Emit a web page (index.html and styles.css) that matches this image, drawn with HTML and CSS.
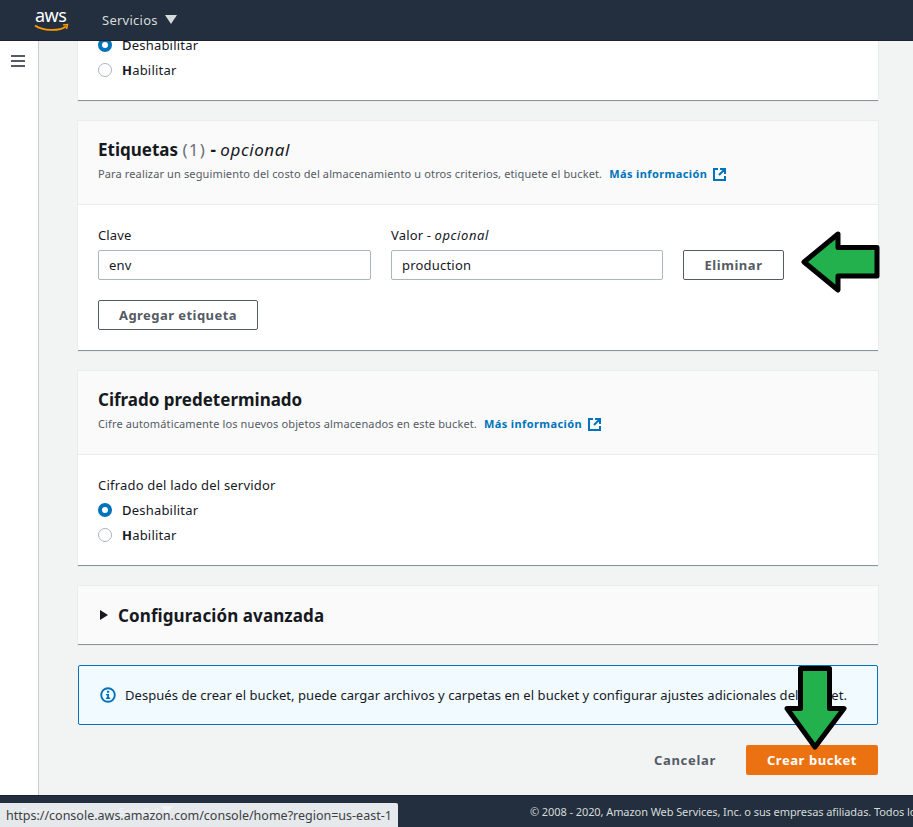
FILE: index.html

```html
<!DOCTYPE html>
<html lang="es">
<head>
  <meta charset="UTF-8">
  <title>Crear bucket</title>
  <link rel="stylesheet" href="styles.css">
</head>
<body>
<header class="topbar">
  <svg class="logo" width="38" height="24" viewBox="0 0 38 24" aria-label="aws">
    <text x="1" y="14" class="logo-text">aws</text>
    <path d="M1 17.5 C9 23 25 23.5 32 18.5" fill="none" stroke="#f90" stroke-width="1.8"/>
    <path d="M29 17 L33.5 16.5 L32.5 21" fill="none" stroke="#f90" stroke-width="1.5"/>
  </svg>
  <span class="services">Servicios</span>
  <span class="caret"></span>
</header>
<div class="middle">
  <aside class="sidebar">
    <div class="burger"><span></span><span></span><span></span></div>
  </aside>
  <main class="content">
    <section class="card card-cut">
      <div class="card-body">
        <div class="radio-row"><span class="radio on"></span><span><b class="first">D</b>eshabilitar</span></div>
        <div class="radio-row"><span class="radio"></span><span><b>H</b>abilitar</span></div>
      </div>
    </section>

    <section class="card">
      <div class="card-head">
        <h2>Etiquetas <span class="count">(1)</span> - <em>opcional</em></h2>
        <p>Para realizar un seguimiento del costo del almacenamiento u otros criterios, etiquete el bucket. <a href="#">Más información</a>
          <svg class="ext" width="15" height="15" viewBox="0 0 15 15"><path d="M6 2H2V13H13V9M8 2H13V7M13 2L7 8" fill="none" stroke="#0073bb" stroke-width="2"/></svg>
        </p>
      </div>
      <div class="card-body tags">
        <div class="tag-row">
          <label class="field">Clave<input class="text-input" value="env"></label>
          <label class="field">Valor - <i>opcional</i><input class="text-input" value="production"></label>
          <button class="btn btn-remove">Eliminar</button>
        </div>
        <button class="btn btn-add">Agregar etiqueta</button>
      </div>
    </section>

    <section class="card">
      <div class="card-head">
        <h2>Cifrado predeterminado</h2>
        <p>Cifre automáticamente los nuevos objetos almacenados en este bucket. <a href="#">Más información</a>
          <svg class="ext" width="15" height="15" viewBox="0 0 15 15"><path d="M6 2H2V13H13V9M8 2H13V7M13 2L7 8" fill="none" stroke="#0073bb" stroke-width="2"/></svg>
        </p>
      </div>
      <div class="card-body encryption">
        <div class="group-label">Cifrado del lado del servidor</div>
        <div class="radio-row"><span class="radio on"></span><span><b class="first">D</b>eshabilitar</span></div>
        <div class="radio-row"><span class="radio"></span><span><b>H</b>abilitar</span></div>
      </div>
    </section>

    <section class="card card-advanced">
      <span class="tri"></span>
      <h2>Configuración avanzada</h2>
    </section>

    <div class="alert">
      <svg width="16" height="16" viewBox="0 0 16 16"><circle cx="8" cy="8" r="6.8" fill="none" stroke="#0073bb" stroke-width="1.9"/><rect x="7" y="3.8" width="2.2" height="2" fill="#0073bb"/><path d="M6 7H9V10.6H10.2V12H6V10.6H7.1V8.3H6Z" fill="#0073bb"/></svg>
      <span>Después de crear el bucket, puede cargar archivos y carpetas en el bucket y configurar ajustes adicionales del bucket.</span>
    </div>

    <div class="actions">
      <a class="cancel" href="#">Cancelar</a>
      <button class="btn-primary">Crear bucket</button>
    </div>
  </main>
</div>
<footer class="footer">
  <div class="footer-left"><span>Comentarios</span><span>Español</span><span class="caret caret-small"></span></div>
  <div class="copy">© 2008 - 2020, Amazon Web Services, Inc. o sus empresas afiliadas. Todos los derechos reservados.</div>
</footer>

<svg class="arrow arrow-left" width="80" height="64" viewBox="0 0 80 64"><path d="M37 4 L3 32 L37 60 V46 H76 V17.5 H37 Z" fill="#22b14c" stroke="#000" stroke-width="5" stroke-linejoin="round"/></svg>
<svg class="arrow arrow-down" width="64" height="88" viewBox="0 0 64 88"><path d="M16.5 3.5 V43.5 H3 L31 82 L60 43.5 H45.5 V3.5 Z" fill="#22b14c" stroke="#000" stroke-width="5" stroke-linejoin="round"/></svg>
<div class="status">https://console.aws.amazon.com/console/home?region=us-east-1</div>
</body>
</html>
```

FILE: styles.css

```css
* { box-sizing: border-box; }
html, body { margin: 0; height: 100%; }
body { width: 913px; height: 827px; overflow: hidden; display: flex; flex-direction: column; position: relative; font-family: "Noto Sans", "Open Sans", sans-serif; font-size: 13px; color: #16191f; background: #f2f3f3; }

.topbar { height: 41px; flex: none; background: #232f3e; display: flex; align-items: center; padding-left: 34px; color: #d5dbdb; border-bottom: 1px solid #1a2430; z-index: 2; }
.logo { margin-right: 30px; margin-top: -1px; }
.logo-text { font: 18px "Noto Sans", sans-serif; fill: #fff; letter-spacing: -.5px; }
.services { font-size: 13px; letter-spacing: .25px; margin-top: -1px; }
.caret { width: 0; height: 0; margin-left: 7px; margin-top: -2px; border-left: 6px solid transparent; border-right: 6px solid transparent; border-top: 9px solid #d5dbdb; }

.middle { flex: 1; display: flex; min-height: 0; }
.sidebar { width: 39px; flex: none; background: #fff; border-right: 1px solid #c8cccc; padding: 14px 11px; }
.burger span { display: block; width: 14px; height: 2px; background: #545b64; margin-bottom: 3px; }

.content { flex: 1; min-width: 0; padding: 0 35px 0 39px; overflow: hidden; }
.card { background: #fff; border-bottom: 1px solid #879596; box-shadow: 0 0 0 1px #eaeded; margin-bottom: 20px; }
.card-cut { margin-top: -9px; }
.card-cut .card-body { padding: 0 20px 18px; }

.card-head { background: #fafafa; border-bottom: 1px solid #eaeded; padding: 17px 20px 0; height: 84px; }
.card-head h2 { margin: 0; font-size: 17px; line-height: 24px; font-weight: 700; }
.card-head h2 em { font-weight: 400; letter-spacing: .6px; }
.count { color: #687078; font-weight: 400; letter-spacing: 1.2px; }
.card-head p { margin: 3px 0 0; font-size: 11px; line-height: 18px; color: #545b64; letter-spacing: .13px; display: flex; align-items: center; gap: 4px; white-space: pre; }
.card-head a { color: #0073bb; font-weight: 700; text-decoration: none; letter-spacing: .4px; }
.ext { margin-left: 1px; }

.radio-row { height: 25px; display: flex; align-items: center; gap: 10px; color: #16191f; letter-spacing: .2px; }
.radio-row b { font-weight: 700; }
.radio-row b.first { font-weight: 500; }
.radio { width: 14px; height: 14px; border-radius: 50%; border: 1px solid #aab7b8; background: #fff; }
.radio.on { border: 4px solid #0073bb; }

.tags { padding: 20px 20px 20px; }
.tag-row { display: flex; align-items: flex-end; gap: 20px; margin-bottom: 20px; }
.field { width: 273px; display: block; letter-spacing: .15px; line-height: 20px; }
.field + .field { width: 272px; }
.field i { font-style: italic; letter-spacing: .6px; }
.text-input { display: block; width: 100%; height: 30px; margin-top: 5px; padding: 0 10px; border: 1px solid #aab7b8; border-radius: 2px; font: 13px "Noto Sans", sans-serif; letter-spacing: .2px; color: #16191f; background: #fff; }

.btn { height: 30px; background: #fff; border: 1px solid #545b64; border-radius: 2px; color: #545b64; font: 700 13px "Noto Sans", sans-serif; letter-spacing: .55px; padding: 0; }
.btn-remove { width: 101px; }
.btn-add { width: 160px; letter-spacing: .45px; }

.encryption { padding: 20px 20px 17px; height: 110px; }
.group-label { line-height: 20px; margin-bottom: 2px; letter-spacing: .2px; }
.card-advanced { height: 59px; background: #fafafa; display: flex; align-items: center; padding-left: 22px; gap: 10px; }
.card-advanced h2 { margin: 0; font-size: 17px; font-weight: 700; letter-spacing: .1px; }
.tri { width: 0; height: 0; border-top: 5px solid transparent; border-bottom: 5px solid transparent; border-left: 8px solid #16191f; }

.alert { height: 60px; background: #f1faff; border: 1px solid #0073bb; border-radius: 2px; display: flex; align-items: center; gap: 9px; padding-left: 21px; letter-spacing: .05px; white-space: nowrap; margin-bottom: 20px; }
.actions { display: flex; justify-content: flex-end; align-items: center; gap: 30px; }
.cancel { color: #545b64; font-weight: 700; text-decoration: none; letter-spacing: .7px; }
.btn-primary { width: 132px; height: 30px; border: 0; border-radius: 2px; background: #ec7211; color: #fff; font: 700 13px "Noto Sans", sans-serif; letter-spacing: .55px; }

.footer { height: 32px; flex: none; background: #232f3e; display: flex; justify-content: space-between; align-items: center; color: #d5dbdb; border-top: 1px solid #1a2430; font-size: 11px; white-space: nowrap; overflow: hidden; }
.footer-left { display: flex; align-items: center; gap: 32px; padding-left: 20px; }
.caret-small { margin-left: -30px; }
.copy { flex: none; width: 383px; letter-spacing: -.08px; }

.arrow { position: absolute; }
.arrow-left { left: 801px; top: 230px; }
.arrow-down { left: 784px; top: 665px; }
.status { position: absolute; left: 0; bottom: 0; width: 398px; height: 24px; padding-left: 6px; line-height: 25px; font-size: 12.5px; background: rgba(241, 243, 244, .95); color: #3c4043; border-top-right-radius: 2px; white-space: nowrap; }
```
